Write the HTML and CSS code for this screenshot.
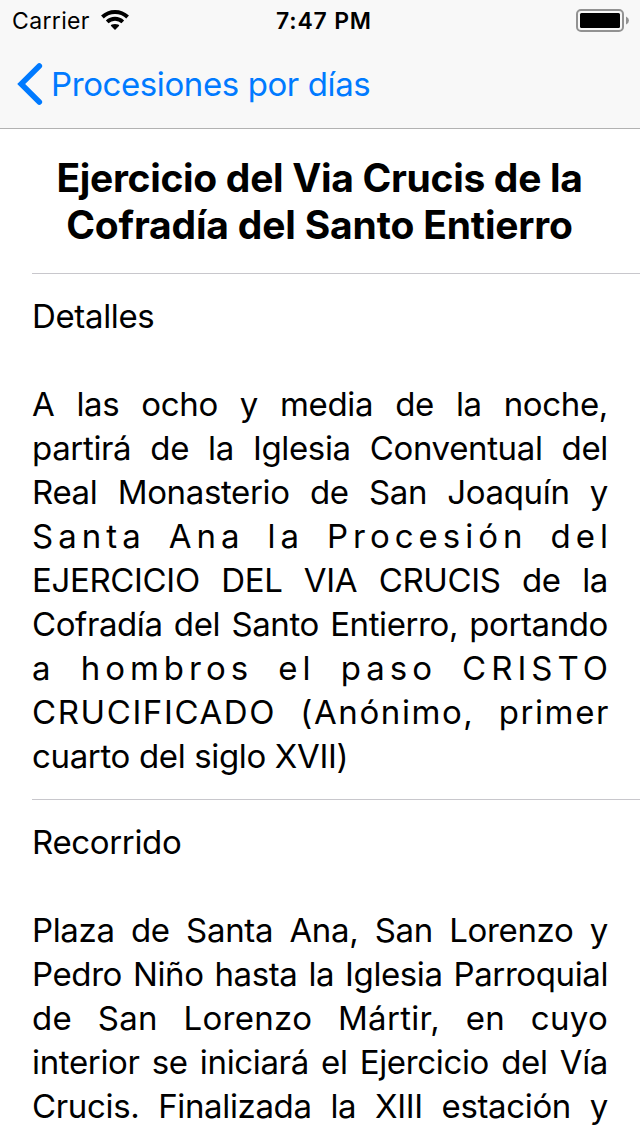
FILE: index.html
```html
<!DOCTYPE html>
<html lang="es">
<head>
<meta charset="utf-8">
<title>Procesiones por días</title>
<link rel="stylesheet" href="styles.css">
</head>
<body>
<header class="top">
  <div class="status">
    <span class="carrier">Carrier</span>
    <svg class="wifi" width="28" height="20" viewBox="0 0 28 20"><path d="M14 20l-4.200-4.200q0-1.800 4.200-1.800t4.200 1.800z"/><path class="arc" d="M6.200 11.800a11.400 11.400 0 0 1 15.600 0M1.400 7a18.300 18.300 0 0 1 25.200 0"/></svg>
    <span class="clock">7:47 PM</span>
    <svg class="battery" width="54" height="24" viewBox="0 0 54 24"><rect class="shell" x="1" y="1" width="46" height="21" rx="4"/><rect x="4" y="4" width="40" height="15" rx="1.500"/><path class="cap" d="M50 7.500q3 1.500 3 4t-3 4z"/></svg>
  </div>
  <nav class="nav">
    <svg class="back" width="26" height="44" viewBox="0 0 26 44"><path d="M22.300 4L4.200 22l18.100 18"/></svg>
    <a class="back-label">Procesiones por días</a>
  </nav>
</header>
<main>
  <section class="row heading">
    <h1><span>Ejercicio del Via Crucis de la</span><span class="second">Cofradía del Santo Entierro</span></h1>
  </section>
  <section class="row details">
    <h2>Detalles</h2>
    <div class="text">
      <p>A las ocho y media de la noche,</p>
      <p>partirá de la Iglesia Conventual del</p>
      <p>Real Monasterio de San Joaquín y</p>
      <p class="wide">Santa Ana la Procesión del</p>
      <p>EJERCICIO DEL VIA CRUCIS de la</p>
      <p class="tight">Cofradía del Santo Entierro, portando</p>
      <p class="wide">a hombros el paso CRISTO</p>
      <p class="loose">CRUCIFICADO (Anónimo, primer</p>
      <p class="last">cuarto del siglo XVII)</p>
    </div>
  </section>
  <section class="row route">
    <h2>Recorrido</h2>
    <div class="text">
      <p>Plaza de Santa Ana, San Lorenzo y</p>
      <p class="tight">Pedro Niño hasta la Iglesia Parroquial</p>
      <p class="airy">de San Lorenzo Mártir, en cuyo</p>
      <p>interior se iniciará el Ejercicio del Vía</p>
      <p>Crucis. Finalizada la XIII estación y</p>
    </div>
  </section>
</main>
</body>
</html>
```
FILE: styles.css
```css
* { box-sizing: border-box; margin: 0; padding: 0; }
body { width: 640px; height: 1136px; overflow: hidden; background: #fff; color: #000; font-family: Inter, "Liberation Sans", sans-serif; }
.top { height: 129px; background: #f8f8f8; border-bottom: 1px solid #b2b2b2; }
.status { height: 40px; display: flex; align-items: center; }
.carrier { width: 90px; padding: 1px 0 0 12px; font-size: 23px; letter-spacing: .35px; white-space: nowrap; }
.wifi { margin-left: 11px; }
.arc { fill: none; stroke: #000; stroke-width: 3.9; }
.clock { margin-left: 147px; padding-top: 1px; width: 100px; font-size: 23px; font-weight: 600; letter-spacing: .8px; white-space: nowrap; }
.battery { margin: 2px 0 0 200px; flex: none; }
.shell { fill: none; stroke: #929292; stroke-width: 2; }
.cap { fill: #929292; }
.nav { height: 88px; display: flex; align-items: center; padding-left: 17px; }
.back { fill: none; stroke: #007aff; stroke-width: 5.6; stroke-linecap: round; }
.back-label { margin-left: 8px; color: #007aff; font-size: 33px; letter-spacing: -.4px; white-space: nowrap; }
.row { margin-left: 32px; border-bottom: 1px solid #c8c7cc; }
.heading { height: 145px; padding: 25px 33px 0 0; }
h1 { font-size: 39px; line-height: 47px; text-align: center; font-weight: 700; letter-spacing: -.32px; }
h1 span { display: block; white-space: nowrap; }
h1 .second { letter-spacing: -.18px; }
.details { height: 526px; }
.row h2 { padding-top: 20px; font-size: 33px; line-height: 44px; font-weight: 400; letter-spacing: -.35px; }
.text { width: 576px; padding-top: 44px; letter-spacing: -.35px; }
.text p { font-size: 33px; line-height: 44px; text-align-last: justify; white-space: nowrap; }
.text .last { text-align-last: left; }
.text .wide { letter-spacing: 5px; margin-right: -5px; }
.text .loose { letter-spacing: 1.6px; margin-right: -2px; }
.text .tight { letter-spacing: -.4px; }
.text .airy { letter-spacing: .3px; }
.route { border-bottom: 0; }
```
